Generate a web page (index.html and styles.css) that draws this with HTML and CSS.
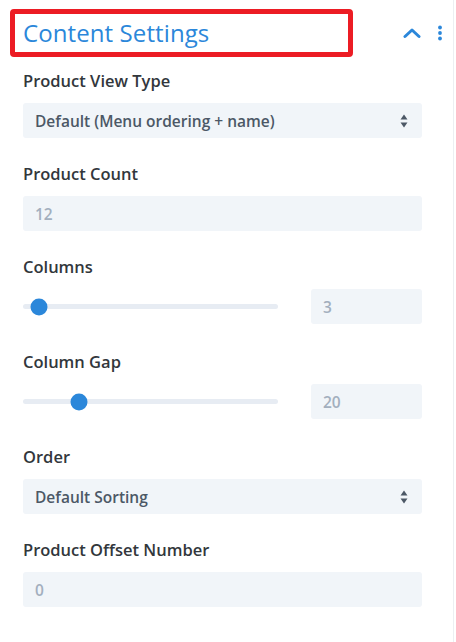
FILE: index.html
```html
<!DOCTYPE html>
<html lang="en">
<head>
<meta charset="utf-8">
<title>Content Settings</title>
<link rel="stylesheet" href="styles.css">
</head>
<body>
<div class="panel">
  <div class="header">
    <div class="title-box"><h2 class="title">Content Settings</h2></div>
    <div class="header-actions">
      <svg class="chevron" width="18" height="12" viewBox="0 0 18 12"><path d="M2 9.5 L9 3 L16 9.5" fill="none" stroke="#2b87da" stroke-width="3" stroke-linecap="round" stroke-linejoin="round"/></svg>
      <svg class="dots" width="6" height="16" viewBox="0 0 6 16"><circle cx="3" cy="2.5" r="1.9" fill="#2b87da"/><circle cx="3" cy="8" r="1.9" fill="#2b87da"/><circle cx="3" cy="13.5" r="1.9" fill="#2b87da"/></svg>
    </div>
  </div>

  <div class="fields">
    <div class="field">
      <div class="label">Product View Type</div>
      <div class="control select">
        <span class="value">Default (Menu ordering + name)</span>
        <svg class="arrows" width="8" height="14" viewBox="0 0 8 14"><path d="M4 0.5 L7.5 5.5 L0.5 5.5 Z" fill="#4c5866"/><path d="M4 13.5 L7.5 8.5 L0.5 8.5 Z" fill="#4c5866"/></svg>
      </div>
    </div>

    <div class="field">
      <div class="label">Product Count</div>
      <div class="control input"><span class="placeholder">12</span></div>
    </div>

    <div class="field field--range">
      <div class="label">Columns</div>
      <div class="range-row">
        <div class="track"><span class="thumb" style="left: 6.1%"></span></div>
        <div class="control input number"><span class="placeholder">3</span></div>
      </div>
    </div>

    <div class="field field--range">
      <div class="label">Column Gap</div>
      <div class="range-row">
        <div class="track"><span class="thumb" style="left: 22%"></span></div>
        <div class="control input number"><span class="placeholder">20</span></div>
      </div>
    </div>

    <div class="field">
      <div class="label">Order</div>
      <div class="control select">
        <span class="value">Default Sorting</span>
        <svg class="arrows" width="8" height="14" viewBox="0 0 8 14"><path d="M4 0.5 L7.5 5.5 L0.5 5.5 Z" fill="#4c5866"/><path d="M4 13.5 L7.5 8.5 L0.5 8.5 Z" fill="#4c5866"/></svg>
      </div>
    </div>

    <div class="field">
      <div class="label">Product Offset Number</div>
      <div class="control input"><span class="placeholder">0</span></div>
    </div>
  </div>
</div>
</body>
</html>
```

FILE: styles.css
```css
* { box-sizing: border-box; }

html, body {
  margin: 0;
  padding: 0;
  background: #ffffff;
}

body {
  font-family: "Open Sans", "Liberation Sans", sans-serif;
  color: #32373c;
}

.panel {
  width: 454px;
  height: 642px;
  border-right: 1px solid #eceff2;
  background: #ffffff;
}

.header {
  display: flex;
  align-items: center;
  padding: 9px 0 0 10px;
  height: 57px;
  margin-bottom: 14px;
}

.title-box {
  width: 343px;
  height: 48px;
  border: 5px solid #ec1c24;
  border-radius: 4px;
  padding-left: 8px;
  display: flex;
  align-items: center;
}

.title {
  margin: 0;
  font-size: 24px;
  font-weight: 400;
  color: #2b87da;
  line-height: 30px;
  letter-spacing: 0.1px;
}

.header-actions {
  display: flex;
  align-items: center;
  margin-left: 50px;
  gap: 16px;
}

.chevron { display: block; }
.dots { display: block; }

.fields {
  padding: 0 31px 0 23px;
}

.field {
  margin-bottom: 26px;
}

.field--range {
  margin-bottom: 28px;
}

.label {
  font-size: 16.5px;
  font-weight: 600;
  line-height: 20px;
  color: #32373c;
  margin-bottom: 12px;
}

.control {
  height: 35px;
  background: #f1f5f9;
  border-radius: 3px;
  display: flex;
  align-items: center;
  padding: 0 12px;
  font-size: 15.5px;
  font-weight: 600;
}

.select {
  justify-content: space-between;
  padding-right: 14px;
}

.value {
  color: #4c5866;
}

.arrows { display: block; }

.placeholder {
  color: #a3afbe;
}

.range-row {
  display: flex;
  align-items: center;
  gap: 33px;
}

.track {
  position: relative;
  width: 255px;
  height: 5px;
  border-radius: 3px;
  background: #e7ecf3;
}

.thumb {
  position: absolute;
  top: 50%;
  width: 17px;
  height: 17px;
  border-radius: 50%;
  background: #2b87da;
  transform: translate(-50%, -50%);
}

.number {
  flex: 1;
}
```
